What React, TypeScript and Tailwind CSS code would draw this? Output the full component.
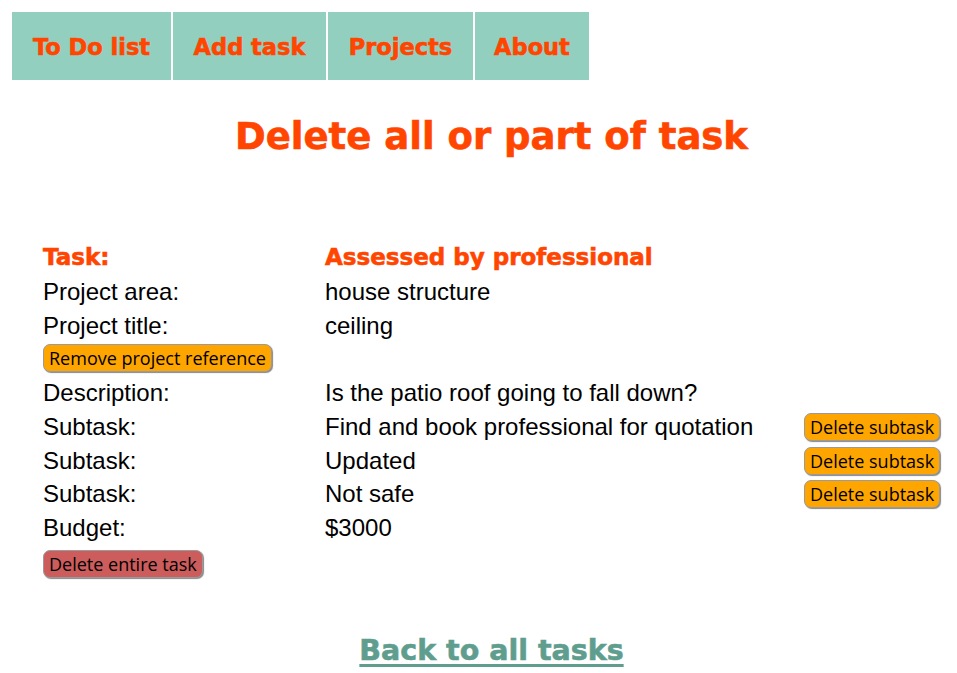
const navItems = [
  { label: "To Do list", w: "w-[159px]" },
  { label: "Add task", w: "w-[153px]" },
  { label: "Projects", w: "w-[145px]" },
  { label: "About", w: "w-[114px]" },
];

const heavy =
  "font-['DejaVu_Sans',sans-serif] font-bold [-webkit-text-stroke:0.6px_currentColor]";
const body = "font-['Liberation_Sans',Arial,sans-serif]";

function Btn({ children, red }: { children: React.ReactNode; red?: boolean }) {
  return (
    <button
      type="button"
      className={`h-[28px] px-[5px] shrink-0 whitespace-nowrap rounded-[7px] border border-[#9a9a9a] shadow-[1px_1px_1px_#888] text-black text-[18px] leading-none font-['Open_Sans',sans-serif] ${
        red ? "bg-[#cd5c5c]" : "bg-[#ffa500]"
      }`}
    >
      {children}
    </button>
  );
}

function Row({
  label,
  value,
  action,
}: {
  label: string;
  value?: string;
  action?: React.ReactNode;
}) {
  return (
    <div className="grid grid-cols-[282px_479px_1fr] items-center h-[33.75px]">
      <span>{label}</span>
      <span>{value}</span>
      <span className="flex">{action}</span>
    </div>
  );
}

export default function App() {
  const subtasks = ["Find and book professional for quotation", "Updated", "Not safe"];
  return (
    <div className="min-h-screen bg-white overflow-hidden">
      <nav className="flex gap-[2px] pt-[12px] pl-[12px]">
        {navItems.map((n) => (
          <a
            key={n.label}
            href="#"
            className={`${n.w} h-[68px] pt-[4px] flex items-center justify-center bg-[#93cfbf] text-[#ff4500] text-[22.5px] ${heavy}`}
          >
            {n.label}
          </a>
        ))}
      </nav>

      <main className="pl-[43px] pr-[17px]">
        <h1
          className={`mt-[33px] text-center text-[37px] leading-[48px] text-[#ff4500] ${heavy}`}
        >
          Delete all or part of task
        </h1>

        <div className={`mt-[79px] text-[24px] text-black ${body}`}>
          <div
            className={`grid grid-cols-[282px_1fr] items-center h-[33.75px] text-[#ff4500] text-[23px] ${heavy}`}
          >
            <span>Task:</span>
            <span>Assessed by professional</span>
          </div>
          <Row label="Project area:" value="house structure" />
          <Row label="Project title:" value="ceiling" />
          <div className="h-[33.75px] flex items-center">
            <Btn>Remove project reference</Btn>
          </div>
          <Row label="Description:" value="Is the patio roof going to fall down?" />
          {subtasks.map((s) => (
            <Row key={s} label="Subtask:" value={s} action={<Btn>Delete subtask</Btn>} />
          ))}
          <Row label="Budget:" value="$3000" />
          <div className="h-[40px] flex items-center">
            <Btn red>Delete entire task</Btn>
          </div>
        </div>

        <div className="mt-[50px] text-center leading-[34px]">
          <a
            href="#"
            className={`text-[28.5px] text-[#5f9e8e] underline decoration-[3px] underline-offset-[4px] ${heavy}`}
          >
            Back to all tasks
          </a>
        </div>
      </main>
    </div>
  );
}
